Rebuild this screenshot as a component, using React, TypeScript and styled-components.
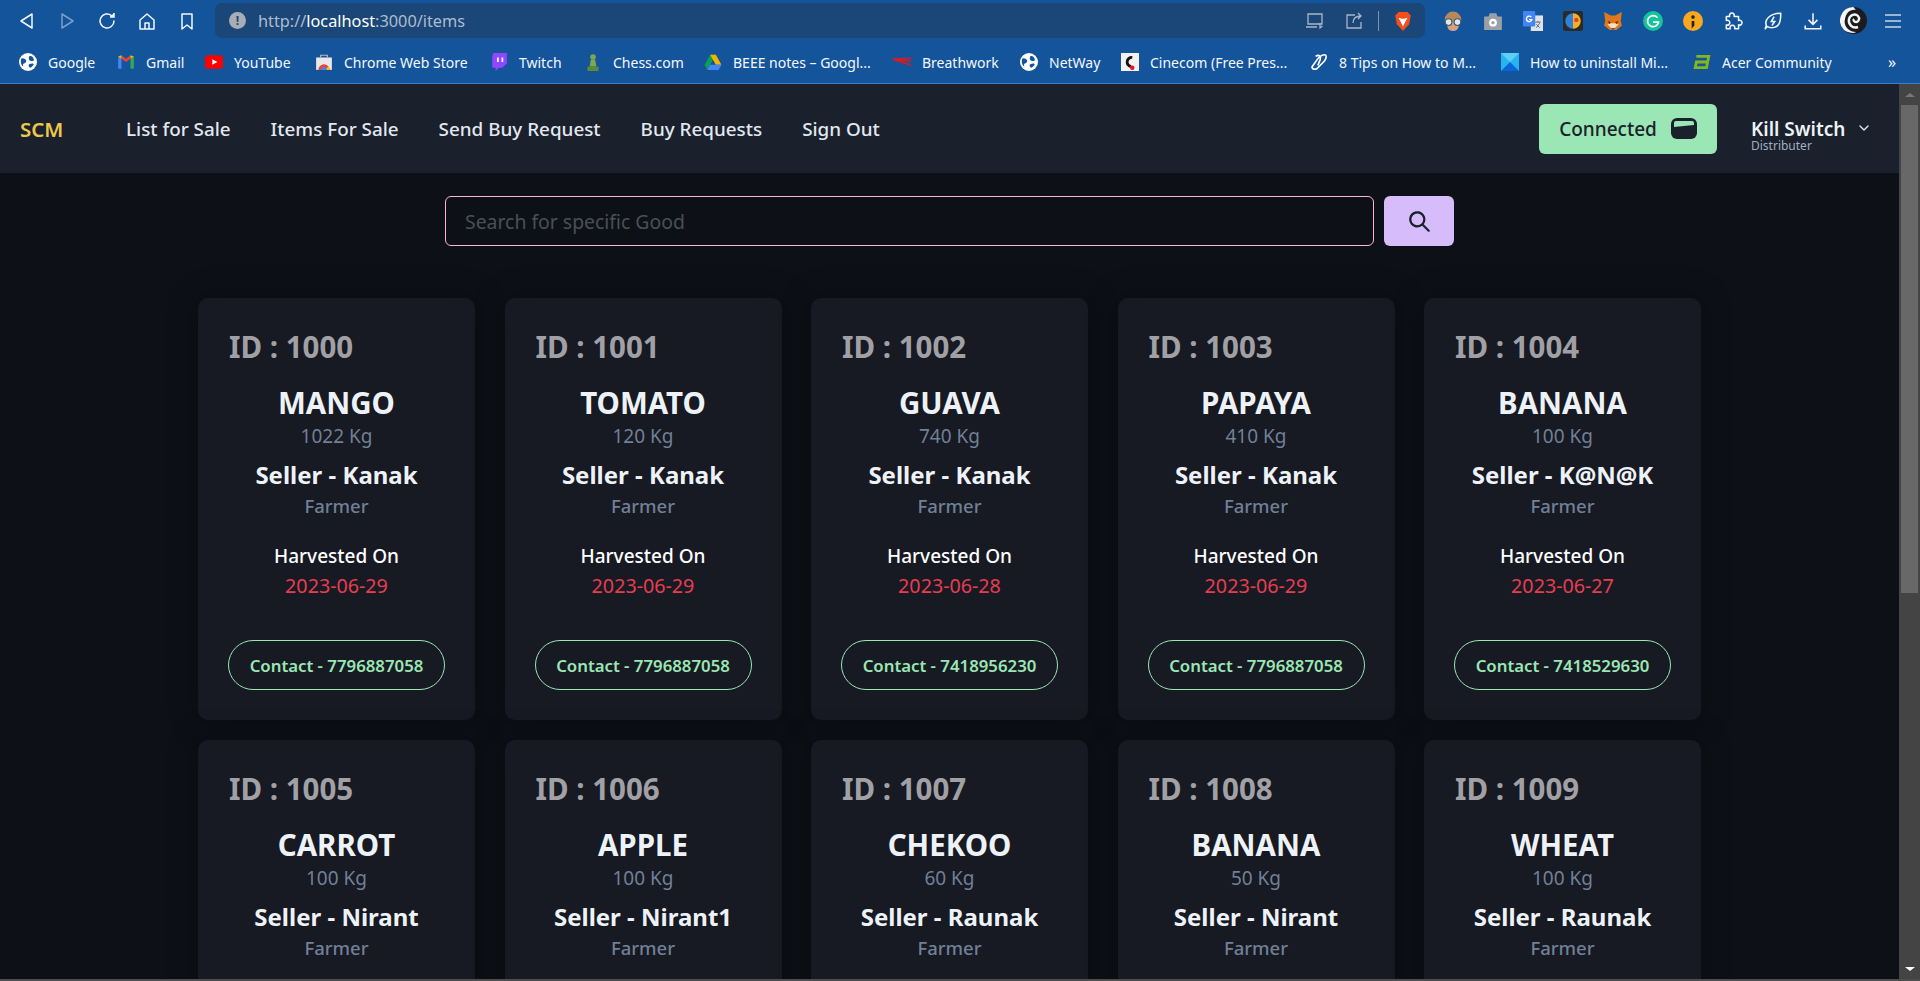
import styled, { createGlobalStyle } from "styled-components";
import { ChevronDown } from "lucide-react";

const Global = createGlobalStyle`
  html, body { margin: 0; padding: 0; height: 100%; overflow: hidden; background: #0d1117; }
  * { box-sizing: border-box; }
`;

const Shell = styled.div`
  width: 1920px;
  height: 981px;
  overflow: hidden;
  display: flex;
  flex-direction: column;
  font-family: "Noto Sans", "Open Sans", sans-serif;
`;

const Chrome = styled.div`
  height: 84px;
  flex: none;
  background: #14549b;
  border-bottom: 1px solid #3f7fc4;
`;

const ToolRow = styled.div`
  height: 41px;
  display: flex;
  align-items: center;
  padding-left: 18px;
`;

const ToolIcon = styled.svg<{ $gap?: number; $dim?: boolean }>`
  width: 18px;
  height: 18px;
  flex: none;
  margin-right: ${(p) => (p.$gap === undefined ? 22 : p.$gap)}px;
  fill: none;
  stroke: ${(p) => (p.$dim ? "#7b9dc6" : "#f2f6fb")};
  stroke-width: 1.5;
`;

const UrlBar = styled.div`
  width: 1210px;
  height: 35px;
  flex: none;
  margin-right: 18px;
  background: #1a4678;
  border-radius: 7px;
  display: flex;
  align-items: center;
  padding: 0 12px 0 14px;
  font-size: 16.3px;
  color: #aebccd;
`;

const UrlInfo = styled.span`
  width: 17px;
  height: 17px;
  border-radius: 50%;
  background: #a7adb5;
  color: #1a4678;
  font-size: 12px;
  font-weight: 700;
  display: flex;
  align-items: center;
  justify-content: center;
  margin-right: 12px;
`;

const UrlHost = styled.span`
  color: #ffffff;
`;

const UrlEnd = styled.div`
  margin-left: auto;
  display: flex;
  align-items: center;
`;

const UrlDivider = styled.span`
  width: 1px;
  height: 20px;
  margin-right: 14px;
  background: #7c94b0;
`;

const Extensions = styled.div`
  display: flex;
  align-items: center;
`;

const Ext = styled.svg<{ $gap?: number; $size?: number }>`
  width: ${(p) => p.$size || 20}px;
  height: ${(p) => p.$size || 20}px;
  flex: none;
  margin-right: ${(p) => (p.$gap === undefined ? 20 : p.$gap)}px;
`;

const BookRow = styled.div`
  height: 42px;
  display: flex;
  align-items: center;
  padding-left: 19px;
`;

const Book = styled.div<{ $w: number }>`
  width: ${(p) => p.$w}px;
  flex: none;
  display: flex;
  align-items: center;
  gap: 11px;
  font-size: 14px;
  color: #f4f7fb;
  white-space: nowrap;
`;

const BookIcon = styled.svg`
  width: 18px;
  height: 18px;
  flex: none;
`;

const More = styled.span`
  color: #f4f7fb;
  font-size: 16px;
`;

const Viewport = styled.div`
  flex: 1;
  min-height: 0;
  display: flex;
`;

const Page = styled.div`
  flex: 1;
  min-width: 0;
  background: #0d1117;
  overflow: hidden;
`;

const Scrollbar = styled.div`
  width: 21px;
  flex: none;
  background: #444444;
  display: flex;
  flex-direction: column;
  align-items: center;
`;

const ScrollArrow = styled.div<{ $down?: boolean }>`
  height: 21px;
  flex: none;
  display: flex;
  align-items: center;
  &::before {
    content: "";
    border-left: 5px solid transparent;
    border-right: 5px solid transparent;
    ${(p) => (p.$down ? "border-top: 4px solid #fff;" : "border-bottom: 4px solid #777;")}
  }
`;

const ScrollThumb = styled.div`
  width: 17px;
  height: 488px;
  flex: none;
  background: #686868;
`;

const ScrollFill = styled.div`
  flex: 1;
`;

const BottomEdge = styled.div`
  height: 2px;
  flex: none;
  background: #4d4d4d;
`;

const Nav = styled.nav`
  height: 89px;
  background: #1a202c;
  display: flex;
  align-items: center;
  padding: 0 24px 0 20px;
`;

const Logo = styled.span`
  width: 106px;
  color: #ecc94b;
  font-size: 20.5px;
  font-weight: 600;
  flex: none;
`;

const NavLinks = styled.div`
  display: flex;
  gap: 40px;
`;

const NavLink = styled.a`
  color: #e2e8f0;
  font-size: 18.85px;
  font-weight: 500;
`;

const ConnectBtn = styled.button`
  margin-left: auto;
  width: 178px;
  height: 50px;
  background: #9ae6b4;
  border: 0;
  border-radius: 6px;
  display: flex;
  align-items: center;
  justify-content: center;
  gap: 14px;
  font: 500 19px "Noto Sans", sans-serif;
  color: #1a202c;
`;

const UserBox = styled.div`
  margin-left: 34px;
  margin-top: 12px;
  width: 124px;
  position: relative;
  display: flex;
  flex-direction: column;
`;

const UserName = styled.span`
  color: #edf2f7;
  font-size: 19px;
  font-weight: 600;
  line-height: 22px;
`;

const UserRole = styled.span`
  color: #a0aec0;
  font-size: 12px;
  line-height: 12px;
`;

const UserCaret = styled(ChevronDown)`
  position: absolute;
  right: 3px;
  top: 2px;
  color: #e2e8f0;
`;

const SearchRow = styled.div`
  display: flex;
  justify-content: center;
  gap: 10px;
  padding-top: 23px;
`;

const SearchInput = styled.input`
  width: 929px;
  height: 50px;
  border: 1px solid #fbb6ce;
  border-radius: 6px;
  background: transparent;
  padding: 0 19px;
  font: 400 19.4px "Noto Sans", sans-serif;
  color: #e2e8f0;
  outline: none;
  &::placeholder {
    color: #4a4f55;
  }
`;

const SearchBtn = styled.button`
  width: 70px;
  height: 50px;
  border: 0;
  border-radius: 6px;
  background: #d6bcfa;
  color: #1a202c;
  display: flex;
  align-items: center;
  justify-content: center;
`;

const SearchGlyph = styled.svg`
  width: 21px;
  height: 21px;
  fill: currentColor;
`;

const Grid = styled.div`
  display: grid;
  grid-template-columns: repeat(5, 277px);
  column-gap: 29.5px;
  row-gap: 20px;
  justify-content: center;
  padding-top: 52px;
`;

const Card = styled.div`
  height: 422px;
  background: #171923;
  border-radius: 10px;
  padding: 31px 30px 0;
  display: flex;
  flex-direction: column;
  align-items: center;
  box-shadow: 0 0 30px rgba(0, 0, 0, 0.35);
`;

const CardId = styled.div`
  align-self: flex-start;
  margin-left: 1px;
  color: #a0a0a5;
  font-size: 29.5px;
  font-weight: 700;
  line-height: 36px;
`;

const ItemName = styled.div`
  margin-top: 20px;
  color: #edf2f7;
  font-size: 29.5px;
  font-weight: 700;
  line-height: 36px;
`;

const Qty = styled.div`
  margin-top: 2px;
  color: #718096;
  font-size: 19px;
  line-height: 26px;
`;

const Seller = styled.div`
  margin-top: 9px;
  color: #edf2f7;
  font-size: 24px;
  font-weight: 700;
  line-height: 34px;
`;

const Role = styled.div`
  margin-top: 1px;
  color: #718096;
  font-size: 18.5px;
  font-weight: 500;
  line-height: 26px;
`;

const HarvestLabel = styled.div`
  margin-top: 22px;
  color: #ffffff;
  font-size: 19px;
  font-weight: 500;
  line-height: 30px;
`;

const HarvestDate = styled.div`
  color: #e53e50;
  font-size: 19.7px;
  line-height: 30px;
`;

const ContactPill = styled.div`
  margin-top: 39px;
  width: 217px;
  height: 50px;
  flex: none;
  border: 1px solid #9ae6b4;
  border-radius: 25px;
  display: flex;
  align-items: center;
  justify-content: center;
  color: #9ae6b4;
  font-size: 16.8px;
  font-weight: 600;
`;

type Good = {
  id: number;
  name: string;
  qty: string;
  seller: string;
  date: string;
  phone: string;
};

const goods: Good[] = [
  { id: 1000, name: "MANGO", qty: "1022 Kg", seller: "Kanak", date: "2023-06-29", phone: "7796887058" },
  { id: 1001, name: "TOMATO", qty: "120 Kg", seller: "Kanak", date: "2023-06-29", phone: "7796887058" },
  { id: 1002, name: "GUAVA", qty: "740 Kg", seller: "Kanak", date: "2023-06-28", phone: "7418956230" },
  { id: 1003, name: "PAPAYA", qty: "410 Kg", seller: "Kanak", date: "2023-06-29", phone: "7796887058" },
  { id: 1004, name: "BANANA", qty: "100 Kg", seller: "K@N@K", date: "2023-06-27", phone: "7418529630" },
  { id: 1005, name: "CARROT", qty: "100 Kg", seller: "Nirant", date: "2023-06-29", phone: "7796887058" },
  { id: 1006, name: "APPLE", qty: "100 Kg", seller: "Nirant1", date: "2023-06-29", phone: "7796887058" },
  { id: 1007, name: "CHEKOO", qty: "60 Kg", seller: "Raunak", date: "2023-06-29", phone: "7796887058" },
  { id: 1008, name: "BANANA", qty: "50 Kg", seller: "Nirant", date: "2023-06-29", phone: "7796887058" },
  { id: 1009, name: "WHEAT", qty: "100 Kg", seller: "Raunak", date: "2023-06-29", phone: "7796887058" },
];

const links = ["List for Sale", "Items For Sale", "Send Buy Request", "Buy Requests", "Sign Out"];

function GlobeIcon() {
  return (
    <BookIcon viewBox="0 0 16 16">
      <circle cx="8" cy="8" r="8" fill="#fff" />
      <path d="M2 5c2-1 3 0 4 1s0 3-1 3-2 1-1 3c-2-1-3-4-2-7zM9 3c2-1 3 0 4 2s-1 2-2 2-3-1-2-4zM9 10c2-1 4-1 4 0s-2 3-3 3-2-2-1-3z" fill="#14549b" />
    </BookIcon>
  );
}

const bookmarks = [
  { label: "Google", w: 98, icon: <GlobeIcon /> },
  {
    label: "Gmail",
    w: 88,
    icon: (
      <BookIcon viewBox="0 0 16 16">
        <path d="M1 3l3 2v9H2a1 1 0 0 1-1-1z" fill="#4285f4" />
        <path d="M15 3l-3 2v9h2a1 1 0 0 0 1-1z" fill="#34a853" />
        <path d="M4 5l4 3 4-3V2L8 5 4 2z" fill="#ea4335" />
        <path d="M1 3l3-1v3zM15 3l-3-1v3z" fill="#fbbc04" />
      </BookIcon>
    ),
  },
  {
    label: "YouTube",
    w: 110,
    icon: (
      <BookIcon viewBox="0 0 16 16">
        <rect y="2" width="16" height="12" rx="3" fill="#f00" />
        <path d="M6.500 5.500L11 8l-4.500 2.500z" fill="#fff" />
      </BookIcon>
    ),
  },
  {
    label: "Chrome Web Store",
    w: 175,
    icon: (
      <BookIcon viewBox="0 0 16 16">
        <rect x="1" y="4" width="14" height="11" fill="#e8e8e8" />
        <path d="M5 4V2h6v2" fill="none" stroke="#bbb" />
        <path d="M3 15a5 5 0 0 1 10 0z" fill="#ea4335" />
        <path d="M8 15h5a5 5 0 0 0-1-3z" fill="#fbbc04" />
        <path d="M5.500 15a2.500 2.500 0 0 1 5 0z" fill="#4285f4" />
      </BookIcon>
    ),
  },
  {
    label: "Twitch",
    w: 94,
    icon: (
      <BookIcon viewBox="0 0 16 16">
        <path d="M3 0h12v9l-4 4H8l-3 3v-3H2V3z" fill="#9146ff" />
        <path d="M7 4v4M11 4v4" stroke="#fff" strokeWidth="1.500" />
      </BookIcon>
    ),
  },
  {
    label: "Chess.com",
    w: 120,
    icon: (
      <BookIcon viewBox="0 0 16 16">
        <circle cx="8" cy="3.500" r="2.500" fill="#7fa650" />
        <path d="M6 6h4l1 6H5z" fill="#7fa650" />
        <rect x="3" y="12" width="10" height="4" rx="1" fill="#5d8a35" />
      </BookIcon>
    ),
  },
  {
    label: "BEEE notes – Googl...",
    w: 189,
    icon: (
      <BookIcon viewBox="0 0 16 16">
        <path d="M5.500 1.500h5L5.500 10.500 3 15 .5 10.500z" fill="#0f9d58" />
        <path d="M10.500 1.500L15.500 10.500h-5L5.500 1.500z" fill="#f4b400" />
        <path d="M3 15l2.500-4.500h10L13 15z" fill="#4285f4" />
      </BookIcon>
    ),
  },
  {
    label: "Breathwork",
    w: 127,
    icon: (
      <BookIcon viewBox="0 0 16 16">
        <path d="M0 4.500l16-.5v1.500L8 6l8 .5v1.500L8 7.200l8 2.800v1.500L0 6.500z" fill="#c8202c" />
      </BookIcon>
    ),
  },
  { label: "NetWay", w: 101, icon: <GlobeIcon /> },
  {
    label: "Cinecom (Free Pres...",
    w: 189,
    icon: (
      <BookIcon viewBox="0 0 16 16">
        <rect width="16" height="16" fill="#f2f2f2" />
        <path d="M10 4a4 4 0 1 0-1 8" fill="none" stroke="#111" strokeWidth="2.500" />
        <circle cx="10" cy="13" r="2" fill="#f01020" />
      </BookIcon>
    ),
  },
  {
    label: "8 Tips on How to M...",
    w: 191,
    icon: (
      <BookIcon viewBox="0 0 16 16" fill="none" stroke="#fff" strokeWidth="1.500">
        <path d="M2 12l5-7c2-3 6-4 7-3s0 4-2 6l-6 6c-2 1-5 0-4-2z" />
        <path d="M5 3c3-2 5 0 4 3l-2 5" />
      </BookIcon>
    ),
  },
  {
    label: "How to uninstall Mi...",
    w: 192,
    icon: (
      <BookIcon viewBox="0 0 16 16">
        <rect width="16" height="16" fill="#28b4f0" />
        <path d="M0 0l8 8 8-8z" fill="#5fd0f5" />
        <path d="M0 16l8-8 8 8z" fill="#0a64d8" />
      </BookIcon>
    ),
  },
  {
    label: "Acer Community",
    w: 195,
    icon: (
      <BookIcon viewBox="0 0 16 16" fill="none" stroke="#83b81a" strokeWidth="2.500">
        <path d="M3 3h11l-2 10H2l1-5h10" />
      </BookIcon>
    ),
  },
];

export default function App() {
  return (
    <Shell>
      <Global />
      <Chrome>
        <ToolRow>
          <ToolIcon viewBox="0 0 18 18">
            <path d="M14 2L3 9l11 7z" strokeLinejoin="round" />
          </ToolIcon>
          <ToolIcon viewBox="0 0 18 18" $dim>
            <path d="M4 2l11 7-11 7z" strokeLinejoin="round" />
          </ToolIcon>
          <ToolIcon viewBox="0 0 18 18">
            <path d="M16 9a7 7 0 1 1-2.500-5.400" strokeLinecap="round" />
            <path d="M16 1v4h-4" fill="#f2f6fb" />
          </ToolIcon>
          <ToolIcon viewBox="0 0 18 18">
            <path d="M2 8l7-6 7 6v9H2zM7 17v-6h4v6" strokeLinejoin="round" />
          </ToolIcon>
          <ToolIcon viewBox="0 0 18 18" $gap={19}>
            <path d="M4 2h10v15l-5-4-5 4z" strokeLinejoin="round" />
          </ToolIcon>
          <UrlBar>
            <UrlInfo>!</UrlInfo>
            <span>
              http://<UrlHost>localhost</UrlHost>:3000/items
            </span>
            <UrlEnd>
              <Ext viewBox="0 0 20 20" $gap={19} fill="none" stroke="#a9b6c6" strokeWidth="1.300">
                <path d="M3 3h14v10H3zM1 16h11M15 12v5l2.500-2" />
              </Ext>
              <Ext viewBox="0 0 20 20" $gap={14} fill="none" stroke="#a9b6c6" strokeWidth="1.300">
                <path d="M11 4H3v13h14v-6M9 12c0-5 3-7 8-7M14 2l3 3-3 3" />
              </Ext>
              <UrlDivider />
              <Ext viewBox="0 0 18 18" $gap={0}>
                <path d="M5 1h8l3 3-1.500 8L9 18l-5.500-6L2 4z" fill="#f1501e" />
                <path d="M5 6l3 1h2l3-1-2 4-2 4-2-4z" fill="#fff" />
              </Ext>
            </UrlEnd>
          </UrlBar>
          <Extensions>
            <Ext viewBox="0 0 18 18">
              <circle cx="9" cy="8" r="7.500" fill="#b8885c" />
              <path d="M4 10h10v4a5 4 0 0 1-10 0z" fill="#d8a080" />
              <circle cx="5" cy="10" r="3" fill="#dfe8ea" stroke="#3a5a6a" />
              <circle cx="13" cy="10" r="3" fill="#dfe8ea" stroke="#3a5a6a" />
            </Ext>
            <Ext viewBox="0 0 18 18">
              <path d="M1 5h4l1-3h6l1 3h4v12H1z" fill="#9aa0a6" />
              <circle cx="9" cy="10.500" r="3.500" fill="#fff" />
              <circle cx="9" cy="10.500" r="1.500" fill="#9aa0a6" />
            </Ext>
            <Ext viewBox="0 0 18 18">
              <rect x="7" y="4" width="11" height="14" fill="#dfe3e8" />
              <path d="M11 10h5M13.500 9v1M12 15l3-4M12 12l3 3" stroke="#667" strokeWidth=".9" />
              <rect x="0" y="0" width="11" height="14" rx="1" fill="#4285f4" />
              <path d="M7.500 5.500a2.500 2.500 0 1 0 .5 2.200H5.500" fill="none" stroke="#fff" strokeWidth="1.200" />
            </Ext>
            <Ext viewBox="0 0 18 18">
              <rect width="18" height="18" rx="2" fill="#2a2a2a" />
              <path d="M9 2a7 7 0 0 0 0 14z" fill="#2f80d8" />
              <path d="M9 2a7 7 0 0 1 0 14z" fill="#f5b020" />
              <circle cx="12" cy="8" r="2" fill="#e04030" />
            </Ext>
            <Ext viewBox="0 0 18 18">
              <path d="M1 1l6 3h4l6-3-1 8 1 4-5 4H6l-5-4 1-4z" fill="#e2761b" />
              <path d="M4 12l5 5 5-5-3-1H7z" fill="#f4e0c8" />
              <path d="M7 15.500l2 1.500 2-1.500z" fill="#2a2a2a" />
              <path d="M4 9l3 1-1 2zM14 9l-3 1 1 2z" fill="#5a3010" />
            </Ext>
            <Ext viewBox="0 0 18 18">
              <circle cx="9" cy="9" r="9" fill="#15c39a" />
              <path d="M13 6a5 5 0 1 0 1 4H9" fill="none" stroke="#fff" strokeWidth="1.500" />
            </Ext>
            <Ext viewBox="0 0 18 18">
              <circle cx="9" cy="9" r="9" fill="#f9a81d" />
              <circle cx="9" cy="5.500" r="1.600" fill="#222" />
              <path d="M7.800 9h2.400v4l-2.400 3z" fill="#222" />
            </Ext>
            <Ext viewBox="0 0 18 18" fill="none" stroke="#f2f6fb" strokeWidth="1.400">
              <path d="M3 5h3a2.200 2.200 0 1 1 4 0h4v3.500a2.200 2.200 0 1 1 0 4V16h-3.500a2.200 2.200 0 1 0-4 0H3v-3.500a2.200 2.200 0 1 0 0-4z" strokeLinejoin="round" />
            </Ext>
            <Ext viewBox="0 0 18 18" fill="none" stroke="#f2f6fb" strokeWidth="1.400">
              <path d="M16 2c0 9-2 13-8 13-2 0-3 0-4-1l-2 2 1-3c-2-5 3-11 13-11z" strokeLinejoin="round" />
              <path d="M10 5L7.500 9.500h3L8 13" />
            </Ext>
            <Ext viewBox="0 0 18 18" $gap={17} fill="none" stroke="#f2f6fb" strokeWidth="1.400">
              <path d="M9 2v10M5 8l4 4 4-4M2 13v3h14v-3" />
            </Ext>
            <Ext viewBox="0 0 27 27" $size={27} $gap={17}>
              <circle cx="13.500" cy="13.500" r="13.500" fill="#1c1c20" />
              <path d="M13 0a13.500 13.500 0 0 0-9 23c6 4 12 3 12 2-7 0-13-6-11-13C6 6 10 2 16 3 14 1 14 0 13 0z" fill="#f5f5f5" />
              <path d="M18 20c-6 2-10-3-9-8 1-4 6-6 9-3 2 2 1 6-2 6-2 0-3-2-2-3" fill="none" stroke="#f5f5f5" strokeWidth="2.400" />
            </Ext>
            <Ext viewBox="0 0 18 18" $size={18} $gap={0} fill="none" stroke="#c8d6e6" strokeWidth="1.500">
              <path d="M1 3h16M1 9h16M1 15h16" />
            </Ext>
          </Extensions>
        </ToolRow>
        <BookRow>
          {bookmarks.map((b) => (
            <Book key={b.label} $w={b.w}>
              {b.icon}
              <span>{b.label}</span>
            </Book>
          ))}
          <More>»</More>
        </BookRow>
      </Chrome>
      <Viewport>
        <Page>
          <Nav>
            <Logo>SCM</Logo>
            <NavLinks>
              {links.map((l) => (
                <NavLink key={l}>{l}</NavLink>
              ))}
            </NavLinks>
            <ConnectBtn>
              Connected
              <svg width="26" height="21" viewBox="0 0 26 21">
                <rect width="26" height="21" rx="6" fill="#1a202c" />
                <path d="M3 5a2 2 0 0 1 2-2h16a2 2 0 0 1 2 2v2L3 9z" fill="#9ae6b4" />
              </svg>
            </ConnectBtn>
            <UserBox>
              <UserName>Kill Switch</UserName>
              <UserRole>Distributer</UserRole>
              <UserCaret size={16} />
            </UserBox>
          </Nav>
          <SearchRow>
            <SearchInput placeholder="Search for specific Good" />
            <SearchBtn>
              <SearchGlyph viewBox="0 0 24 24">
                <path d="M23.384,21.619,16.855,15.09a9.284,9.284,0,1,0-1.768,1.768l6.529,6.529a1.266,1.266,0,0,0,1.768,0A1.251,1.251,0,0,0,23.384,21.619ZM2.75,9.5a6.75,6.75,0,1,1,6.75,6.75A6.758,6.758,0,0,1,2.75,9.5Z" />
              </SearchGlyph>
            </SearchBtn>
          </SearchRow>
          <Grid>
            {goods.map((g) => (
              <Card key={g.id}>
                <CardId>ID : {g.id}</CardId>
                <ItemName>{g.name}</ItemName>
                <Qty>{g.qty}</Qty>
                <Seller>Seller - {g.seller}</Seller>
                <Role>Farmer</Role>
                <HarvestLabel>Harvested On</HarvestLabel>
                <HarvestDate>{g.date}</HarvestDate>
                <ContactPill>Contact - {g.phone}</ContactPill>
              </Card>
            ))}
          </Grid>
        </Page>
        <Scrollbar>
          <ScrollArrow />
          <ScrollThumb />
          <ScrollFill />
          <ScrollArrow $down />
        </Scrollbar>
      </Viewport>
      <BottomEdge />
    </Shell>
  );
}
